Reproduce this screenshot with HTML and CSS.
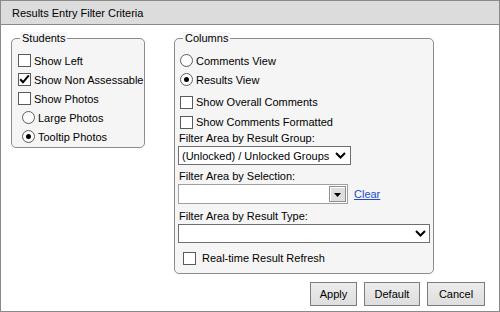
FILE: index.html
```html
<!DOCTYPE html>
<html>
<head>
<meta charset="utf-8">
<title>Results Entry Filter Criteria</title>
<link rel="stylesheet" href="styles.css">
</head>
<body>
<div class="dialog">
  <div class="titlebar">Results Entry Filter Criteria</div>
  <div class="content">
    <div class="panels">
      <fieldset class="group students">
        <legend>Students</legend>
        <label class="row"><span class="cb"></span>Show Left</label>
        <label class="row"><span class="cb"><svg width="13" height="13" viewBox="0 0 13 13"><polyline points="2.2,6.3 5,9.3 10.8,2.3" fill="none" stroke="#000" stroke-width="2"/></svg></span>Show Non Assessable</label>
        <label class="row"><span class="cb"></span>Show Photos</label>
        <label class="row sub"><span class="rb"></span>Large Photos</label>
        <label class="row sub"><span class="rb on"></span>Tooltip Photos</label>
      </fieldset>
      <fieldset class="group columns">
        <legend>Columns</legend>
        <label class="row"><span class="rb"></span>Comments View</label>
        <label class="row"><span class="rb on"></span>Results View</label>
        <label class="row cbrow first"><span class="cb"></span>Show Overall Comments</label>
        <label class="row cbrow"><span class="cb"></span>Show Comments Formatted</label>
        <div class="field-label">Filter Area by Result Group:</div>
        <div class="select sel-group"><span class="sel-text">(Unlocked) / Unlocked Groups</span><svg class="chev" width="11" height="7" viewBox="0 0 11 7"><polyline points="1,1 5.5,5.5 10,1" fill="none" stroke="#000" stroke-width="2"/></svg></div>
        <div class="field-label l2">Filter Area by Selection:</div>
        <div class="combo-row">
          <div class="combo"><span class="combo-btn"><svg width="7" height="4" viewBox="0 0 7 4"><polygon points="0,0 7,0 3.5,4" fill="#000"/></svg></span></div>
          <a class="link" href="#">Clear</a>
        </div>
        <div class="field-label l3">Filter Area by Result Type:</div>
        <div class="select sel-type"><span class="sel-text"></span><svg class="chev" width="11" height="7" viewBox="0 0 11 7"><polyline points="1,1 5.5,5.5 10,1" fill="none" stroke="#000" stroke-width="2"/></svg></div>
        <label class="row realtime"><span class="cb"></span>Real-time Result Refresh</label>
      </fieldset>
    </div>
    <div class="buttons">
      <button class="btn apply">Apply</button>
      <button class="btn default">Default</button>
      <button class="btn cancel">Cancel</button>
    </div>
  </div>
</div>
</body>
</html>
```
FILE: styles.css
```css
* { box-sizing: border-box; }
html, body { margin: 0; padding: 0; background: #fff; }
body {
  font-family: "Liberation Sans", Arial, sans-serif;
  font-size: 11px;
  color: #000;
}
.dialog {
  width: 500px;
  height: 312px;
  border: 1px solid #8a8a8a;
  display: flex;
  flex-direction: column;
}
.titlebar {
  height: 24px;
  background: #dcdcdc;
  border-bottom: 1px solid #8a8a8a;
  padding: 6px 0 0 11px;
  line-height: 13px;
  font-size: 11px;
}
.content {
  flex: 1;
  padding: 7px 14px 0 10px;
  display: flex;
  flex-direction: column;
}
.panels {
  display: flex;
  align-items: flex-start;
  gap: 29px;
}
.group {
  margin: 0;
  min-width: 0;
  border: 1px solid #8c8c8c;
  border-radius: 5px;
  background: #f5f5f5;
}
.group legend {
  margin-left: 8px;
  padding: 0 2px;
  line-height: 13px;
  font-size: 11px;
  background: #f5f5f5;
}
.students {
  width: 134px;
  padding: 6px 0 1px 0;
}
.students .row { padding-left: 6px; }
.students .row.sub { padding-left: 10px; }
.columns {
  width: 260px;
  padding: 6px 0 5px 0;
}
.row {
  display: flex;
  align-items: center;
  height: 19px;
  white-space: nowrap;
}
.columns .row { padding-left: 5px; }
.cbrow { height: 20px; }
.cbrow.first { margin-top: 3px; }
.cb {
  width: 13px;
  height: 13px;
  flex: none;
  border: 1px solid #5a5a5a;
  background: #fff;
  margin-right: 3px;
}
.cb svg { display: block; margin: -1px 0 0 -1px; }
.rb {
  width: 13px;
  height: 13px;
  flex: none;
  border: 1px solid #5e5e5e;
  border-radius: 50%;
  background: radial-gradient(circle at 50% 40%, #fff 55%, #e6e6e6 100%);
  margin-right: 3px;
  display: flex;
  align-items: center;
  justify-content: center;
}
.rb.on::after {
  content: "";
  width: 5px;
  height: 5px;
  border-radius: 50%;
  background: #000;
}
.field-label {
  padding-left: 4px;
  line-height: 13px;
}
.field-label.l2 { margin-top: 5px; }
.field-label.l3 { margin-top: 6px; }
.select {
  margin: 1px 0 0 3px;
  height: 19px;
  border: 1px solid #6e6e6e;
  background: #fff;
  display: flex;
  align-items: center;
  padding: 0 4px 0 3px;
}
.sel-text { flex: 1; white-space: nowrap; }
.chev { flex: none; display: block; }
.sel-group { width: 173px; }
.sel-type { width: 252px; padding-right: 3px; }
.combo-row {
  margin: 1px 0 0 3px;
  display: flex;
  align-items: center;
  height: 20px;
}
.combo {
  width: 170px;
  height: 20px;
  border: 1px solid #a0a0a0;
  background: #fff;
  display: flex;
  justify-content: flex-end;
  padding: 1px;
}
.combo-btn {
  width: 17px;
  height: 16px;
  border: 1px solid #8e8e8e;
  box-shadow: inset 1px 1px 0 #fff;
  background: #dedede;
  display: flex;
  align-items: center;
  justify-content: center;
  padding-top: 2px;
}
.combo-btn svg { display: block; }
.link {
  margin-left: 6px;
  color: #1a4bc8;
  text-decoration: underline;
}
.realtime {
  height: 20px;
  margin-top: 5px;
}
.columns .realtime { padding-left: 8px; }
.realtime .cb { margin-right: 6px; }
.buttons {
  margin-top: 8px;
  display: flex;
  justify-content: flex-end;
  gap: 7px;
}
.btn {
  height: 24px;
  padding: 0;
  border: 1px solid #7c7c7c;
  border-radius: 0;
  background: linear-gradient(#ececec, #dedede);
  font-family: "Liberation Sans", Arial, sans-serif;
  font-size: 11px;
  color: #000;
}
.btn.apply { width: 47px; }
.btn.default { width: 56px; }
.btn.cancel { width: 58px; }
```
